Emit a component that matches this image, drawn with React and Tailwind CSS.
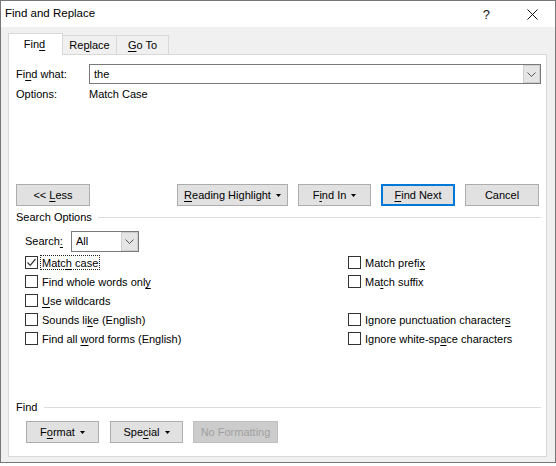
import React from "react";

const FONT = "font-['Segoe_UI','Liberation_Sans',Arial,sans-serif]";

function U({ children }) {
  return <span className="underline decoration-1 underline-offset-[2px]">{children}</span>;
}

function Tri() {
  return (
    <svg width="5" height="3" viewBox="0 0 5 3" className="ml-[5px] mt-[1px]">
      <path d="M0 0 H5 L2.5 3 Z" fill="#000" />
    </svg>
  );
}

function Chevron() {
  return (
    <svg width="9" height="5" viewBox="0 0 9 5">
      <path d="M0.5 0.5 L4.5 4.5 L8.5 0.5" fill="none" stroke="#555" strokeWidth="1" />
    </svg>
  );
}

function Btn({ children, className = "", arrow, primary }) {
  return (
    <div
      className={
        "h-[22px] flex items-center justify-center bg-[#e1e1e1] text-black " +
        (primary ? "border-2 border-[#0078d7] " : "border border-[#adadad] ") +
        className
      }
    >
      <span>{children}</span>
      {arrow && <Tri />}
    </div>
  );
}

function Check({ checked, children, focus }) {
  return (
    <div className="h-[19px] flex items-center">
      <div className="w-[13px] h-[13px] border border-[#333] bg-white flex items-center justify-center shrink-0">
        {checked && (
          <svg width="11" height="11" viewBox="0 0 11 11">
            <path d="M1.5 5.5 L4.2 8.3 L9.5 2" fill="none" stroke="#333" strokeWidth="1.2" />
          </svg>
        )}
      </div>
      <div
        className={
          "ml-[2px] h-[15px] leading-[14px] px-[1px] whitespace-nowrap " +
          (focus ? "border border-dotted border-[#222]" : "border border-transparent")
        }
      >
        {children}
      </div>
    </div>
  );
}

export default function App() {
  return (
    <div className={"w-[556px] h-[466px] bg-white overflow-hidden text-[11px] text-black " + FONT}>
      <div className="w-[556px] h-[463px] border border-[#777] bg-[#f0f0f0] flex flex-col">
        {/* Title bar */}
        <div className="h-[26px] bg-white flex items-center shrink-0">
          <span className="ml-[4px] text-[11.5px]">Find and Replace</span>
          <span className="ml-auto text-[13px] leading-none mr-[37px] text-[#111]">?</span>
          <svg width="11" height="11" viewBox="0 0 11 11" className="mr-[17px]">
            <path d="M0.5 0.5 L10.5 10.5 M10.5 0.5 L0.5 10.5" stroke="#111" strokeWidth="1" />
          </svg>
        </div>

        {/* Body */}
        <div className="pl-[7px] pt-[6px] flex flex-col">
          {/* Tabs */}
          <div className="flex items-end -mb-px relative">
            <div className="w-[55px] h-[22px] bg-white border-t border-l border-r border-[#d9d9d9] flex items-center justify-center relative z-20 pb-[1px]">
              <span className="-ml-[2px]">Fin<U>d</U></span>
            </div>
            <div className="w-[55px] h-[20px] -ml-px bg-[#f0f0f0] border border-[#d9d9d9] flex items-center justify-center relative z-10">
              <span>Re<U>p</U>lace</span>
            </div>
            <div className="w-[53px] h-[20px] -ml-px bg-[#f0f0f0] border border-[#d9d9d9] flex items-center justify-center relative z-10">
              <span><U>G</U>o To</span>
            </div>
          </div>

          {/* Panel */}
          <div className="w-[539px] h-[403px] bg-white border border-[#d9d9d9] flex flex-col">
            {/* Find what */}
            <div className="mt-[9px] pl-[7px] flex items-center">
              <div className="w-[73px]">Fi<U>n</U>d what:</div>
              <div className="w-[452px] h-[20px] border border-[#7a7a7a] flex items-center">
                <span className="pl-[4px] flex-1">the</span>
                <div className="w-[17px] h-[18px] bg-[#e5e5e5] border border-[#cfcfcf] flex items-center justify-center">
                  <Chevron />
                </div>
              </div>
            </div>
            {/* Options */}
            <div className="mt-[3px] pl-[7px] flex h-[15px] leading-[15px]">
              <div className="w-[73px]">Options:</div>
              <div>Match Case</div>
            </div>

            {/* Buttons row */}
            <div className="mt-[82px] pl-[7px] flex">
              <Btn className="w-[74px]">&lt;&lt; <U>L</U>ess</Btn>
              <Btn className="w-[111px] ml-[87px]" arrow><U>R</U>eading Highlight</Btn>
              <Btn className="w-[73px] ml-[10px]" arrow>F<U>i</U>nd In</Btn>
              <Btn className="w-[74px] ml-[10px]" primary><U>F</U>ind Next</Btn>
              <Btn className="w-[74px] ml-[10px]">Cancel</Btn>
            </div>

            {/* Search Options */}
            <div className="mt-[4px] pl-[7px] flex items-center h-[15px]">
              <span>Search Options</span>
              <div className="ml-[6px] flex-1 mr-[5px] h-px bg-[#dcdcdc]" />
            </div>

            {/* Search select */}
            <div className="mt-[6px] pl-[16px] flex items-center">
              <div className="w-[46px]">Search<U>:</U></div>
              <div className="w-[68px] h-[21px] border border-[#7a7a7a] flex items-center">
                <span className="pl-[4px] flex-1">All</span>
                <div className="w-[17px] h-[19px] bg-[#e5e5e5] border border-[#cfcfcf] flex items-center justify-center">
                  <Chevron />
                </div>
              </div>
            </div>

            {/* Checkboxes */}
            <div className="mt-[1px] pl-[16px] grid grid-cols-[323px_1fr]">
              <div className="flex flex-col">
                <Check checked focus>Matc<U>h</U> case</Check>
                <Check>Find whole words onl<U>y</U></Check>
                <Check><U>U</U>se wildcards</Check>
                <Check>Sounds li<U>k</U>e (English)</Check>
                <Check>Find all <U>w</U>ord forms (English)</Check>
              </div>
              <div className="flex flex-col">
                <Check>Match prefi<U>x</U></Check>
                <Check>Ma<U>t</U>ch suffix</Check>
                <div className="h-[19px]" />
                <Check>Ignore punctuation character<U>s</U></Check>
                <Check>Ignore white-sp<U>a</U>ce characters</Check>
              </div>
            </div>

            <div className="flex-1" />

            {/* Find formatting */}
            <div className="pl-[7px] flex items-center h-[15px]">
              <span>Find</span>
              <div className="ml-[7px] flex-1 mr-[5px] h-px bg-[#dcdcdc]" />
            </div>
            <div className="mt-[6px] mb-[13px] pl-[17px] flex">
              <Btn className="w-[73px]" arrow>F<U>o</U>rmat</Btn>
              <Btn className="w-[73px] ml-[11px]" arrow>Spe<U>c</U>ial</Btn>
              <div className="w-[85px] ml-[10px] h-[22px] bg-[#cccccc] border border-[#bfbfbf] flex items-center justify-center text-[#a0a0a0]">
                No Formatting
              </div>
            </div>
          </div>
        </div>
      </div>
    </div>
  );
}
